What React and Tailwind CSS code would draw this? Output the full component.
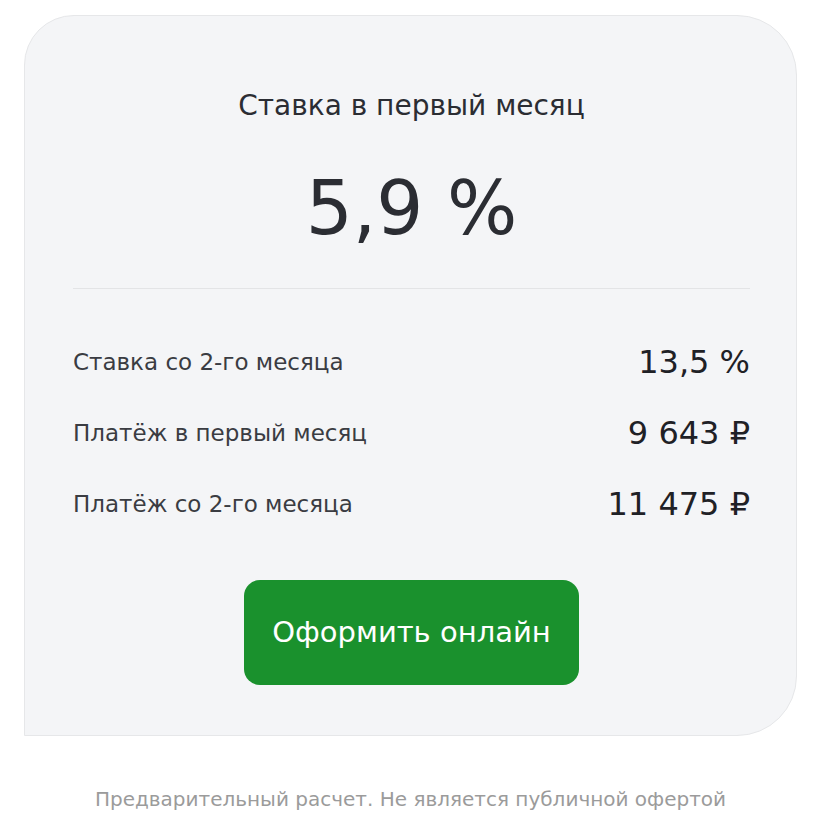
const rows = [
  { label: 'Ставка со 2-го месяца', value: '13,5 %' },
  { label: 'Платёж в первый месяц', value: '9 643 ₽' },
  { label: 'Платёж со 2-го месяца', value: '11 475 ₽' },
]

export default function App() {
  return (
    <div className="min-h-[828px] bg-white pt-[15px] pl-[24px] pr-[22px] font-['DejaVu_Sans',sans-serif]">
      <div className="bg-[#f4f5f7] border border-[#e6e7e9] rounded-tl-[50px] rounded-tr-[60px] rounded-br-[60px] rounded-bl-none pl-[48px] pr-[46px] pt-[73px] pb-[50px]">
        <p className="text-center text-[28px] leading-[34px] text-[#2b2d33]">Ставка в первый месяц</p>
        <p className="text-center text-[74px] leading-[90px] mt-[40px] text-[#2b2d33]">5,9 %</p>
        <div className="h-px bg-[#e3e4e6] mt-[35px]" />
        <div className="mt-[56px] flex flex-col gap-[37px]">
          {rows.map(row => (
            <div key={row.label} className="flex items-center justify-between h-[34px]">
              <span className="text-[23px] text-[#3a3c42]">{row.label}</span>
              <span className="text-[32px] text-[#1f2126]">{row.value}</span>
            </div>
          ))}
        </div>
        <div className="flex justify-center mt-[59px]">
          <button className="w-[335px] h-[105px] rounded-[16px] bg-[#1a912d] text-white text-[29px]">
            Оформить онлайн
          </button>
        </div>
      </div>
      <p className="text-center text-[20px] text-[#9b9b9b] mt-[48px]">Предварительный расчет. Не является публичной офертой</p>
    </div>
  )
}
